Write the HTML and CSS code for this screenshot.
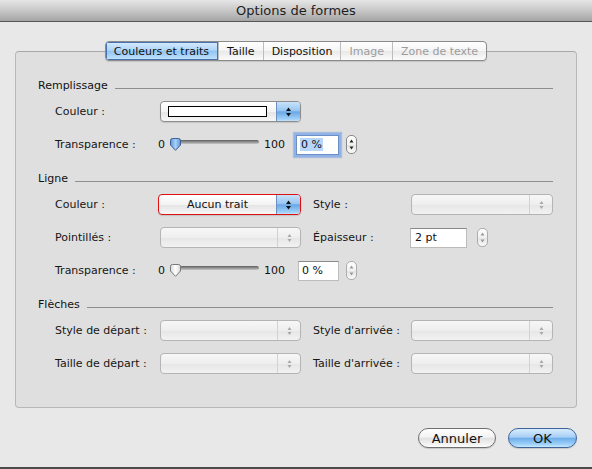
FILE: index.html
```html
<!DOCTYPE html>
<html lang="fr">
<head>
<meta charset="utf-8">
<title>Options de formes</title>
<link rel="stylesheet" href="styles.css">
</head>
<body>
<div class="window">
  <div class="titlebar">Options de formes</div>
  <div class="content">
    <div class="tabs">
      <div class="tab selected">Couleurs et traits</div>
      <div class="tab">Taille</div>
      <div class="tab">Disposition</div>
      <div class="tab disabled">Image</div>
      <div class="tab disabled">Zone de texte</div>
    </div>
    <div class="panel">
      <section class="group">
        <div class="group-head"><span>Remplissage</span><span class="rule"></span></div>
        <div class="row">
          <span class="lbl">Couleur :</span>
          <div class="popup">
            <span class="popup-body"><span class="swatch"></span></span>
            <span class="popup-arrows blue"><svg width="7" height="10" viewBox="0 0 7 10"><polygon points="1,4 3.5,0.5 6,4" fill="#111"/><polygon points="1,6 3.5,9.5 6,6" fill="#111"/></svg></span>
          </div>
        </div>
        <div class="row">
          <span class="lbl">Transparence :</span>
          <div class="trans">
            <span class="num zero">0</span>
            <div class="slider">
              <span class="track"></span>
              <svg class="thumb" width="13" height="13" viewBox="0 0 13 13"><defs><linearGradient id="tb" x1="0" y1="0" x2="1" y2="0"><stop offset="0" stop-color="#5d95d8"/><stop offset="0.5" stop-color="#a9d0f7"/><stop offset="1" stop-color="#5d95d8"/></linearGradient></defs><path d="M1.5 2.5 Q1.5 0.5 3.5 0.5 H9.5 Q11.5 0.5 11.5 2.5 V7 L6.5 12.3 L1.5 7 Z" fill="url(#tb)" stroke="#3b5f96" stroke-width="1"/></svg>
            </div>
            <span class="num">100</span>
            <div class="field focused"><span class="sel">0 %</span></div>
            <div class="stepper"><svg width="5" height="13" viewBox="0 0 5 13"><polygon points="0.5,4.5 2.5,1.5 4.5,4.5" fill="#222"/><polygon points="0.5,8.5 2.5,11.5 4.5,8.5" fill="#222"/></svg></div>
          </div>
        </div>
      </section>

      <section class="group">
        <div class="group-head"><span>Ligne</span><span class="rule"></span></div>
        <div class="row">
          <span class="lbl">Couleur :</span>
          <div class="popup error">
            <span class="popup-body center">Aucun trait</span>
            <span class="popup-arrows blue"><svg width="7" height="10" viewBox="0 0 7 10"><polygon points="1,4 3.5,0.5 6,4" fill="#111"/><polygon points="1,6 3.5,9.5 6,6" fill="#111"/></svg></span>
          </div>
          <span class="lbl lbl2">Style :</span>
          <div class="popup disabled c5">
            <span class="popup-body"></span>
            <span class="popup-arrows"><svg width="7" height="10" viewBox="0 0 7 10"><polygon points="1.5,4 3.5,1 5.5,4" fill="#a8a8a8"/><polygon points="1.5,6 3.5,9 5.5,6" fill="#a8a8a8"/></svg></span>
          </div>
        </div>
        <div class="row">
          <span class="lbl">Pointillés :</span>
          <div class="popup disabled">
            <span class="popup-body"></span>
            <span class="popup-arrows"><svg width="7" height="10" viewBox="0 0 7 10"><polygon points="1.5,4 3.5,1 5.5,4" fill="#a8a8a8"/><polygon points="1.5,6 3.5,9 5.5,6" fill="#a8a8a8"/></svg></span>
          </div>
          <span class="lbl lbl2">Épaisseur :</span>
          <div class="thick c5">
            <div class="field wide">2 pt</div>
            <div class="stepper dim"><svg width="5" height="13" viewBox="0 0 5 13"><polygon points="0.5,4.5 2.5,1.5 4.5,4.5" fill="#9a9a9a"/><polygon points="0.5,8.5 2.5,11.5 4.5,8.5" fill="#9a9a9a"/></svg></div>
          </div>
        </div>
        <div class="row">
          <span class="lbl">Transparence :</span>
          <div class="trans">
            <span class="num zero">0</span>
            <div class="slider">
              <span class="track"></span>
              <svg class="thumb" width="13" height="13" viewBox="0 0 13 13"><defs><linearGradient id="tw" x1="0" y1="0" x2="1" y2="0"><stop offset="0" stop-color="#d8d8d8"/><stop offset="0.5" stop-color="#ffffff"/><stop offset="1" stop-color="#d8d8d8"/></linearGradient></defs><path d="M1.5 2.5 Q1.5 0.5 3.5 0.5 H9.5 Q11.5 0.5 11.5 2.5 V7 L6.5 12.3 L1.5 7 Z" fill="url(#tw)" stroke="#777" stroke-width="1"/></svg>
            </div>
            <span class="num">100</span>
            <div class="field plain">0 %</div>
            <div class="stepper dim"><svg width="5" height="13" viewBox="0 0 5 13"><polygon points="0.5,4.5 2.5,1.5 4.5,4.5" fill="#9a9a9a"/><polygon points="0.5,8.5 2.5,11.5 4.5,8.5" fill="#9a9a9a"/></svg></div>
          </div>
        </div>
      </section>

      <section class="group">
        <div class="group-head"><span>Flèches</span><span class="rule"></span></div>
        <div class="row">
          <span class="lbl">Style de départ :</span>
          <div class="popup disabled">
            <span class="popup-body"></span>
            <span class="popup-arrows"><svg width="7" height="10" viewBox="0 0 7 10"><polygon points="1.5,4 3.5,1 5.5,4" fill="#a8a8a8"/><polygon points="1.5,6 3.5,9 5.5,6" fill="#a8a8a8"/></svg></span>
          </div>
          <span class="lbl lbl2">Style d'arrivée :</span>
          <div class="popup disabled c5">
            <span class="popup-body"></span>
            <span class="popup-arrows"><svg width="7" height="10" viewBox="0 0 7 10"><polygon points="1.5,4 3.5,1 5.5,4" fill="#a8a8a8"/><polygon points="1.5,6 3.5,9 5.5,6" fill="#a8a8a8"/></svg></span>
          </div>
        </div>
        <div class="row">
          <span class="lbl">Taille de départ :</span>
          <div class="popup disabled">
            <span class="popup-body"></span>
            <span class="popup-arrows"><svg width="7" height="10" viewBox="0 0 7 10"><polygon points="1.5,4 3.5,1 5.5,4" fill="#a8a8a8"/><polygon points="1.5,6 3.5,9 5.5,6" fill="#a8a8a8"/></svg></span>
          </div>
          <span class="lbl lbl2">Taille d'arrivée :</span>
          <div class="popup disabled c5">
            <span class="popup-body"></span>
            <span class="popup-arrows"><svg width="7" height="10" viewBox="0 0 7 10"><polygon points="1.5,4 3.5,1 5.5,4" fill="#a8a8a8"/><polygon points="1.5,6 3.5,9 5.5,6" fill="#a8a8a8"/></svg></span>
          </div>
        </div>
      </section>
    </div>
    <div class="buttons">
      <div class="btn cancel">Annuler</div>
      <div class="btn default">OK</div>
    </div>
  </div>
</div>
</body>
</html>
```

FILE: styles.css
```css
html, body {
  margin: 0;
  padding: 0;
}
body {
  background: #e8e8e8;
  font-family: "DejaVu Sans", "Lucida Grande", sans-serif;
  font-size: 11px;
  color: #161616;
}
.window {
  width: 592px;
  height: 469px;
  box-sizing: border-box;
  display: flex;
  flex-direction: column;
  border-bottom: 2px solid #4a4a4a;
  overflow: hidden;
}
.titlebar {
  flex: none;
  height: 22px;
  box-sizing: border-box;
  border-bottom: 1px solid #565656;
  background: linear-gradient(#e6e6e6, #c4c4c4 55%, #a4a4a4);
  display: flex;
  align-items: center;
  justify-content: center;
  font-size: 13px;
  color: #1e1e1e;
}
.content {
  flex: 1;
  display: flex;
  flex-direction: column;
  padding: 19px 15px 0;
}
.tabs {
  align-self: center;
  display: flex;
  height: 20px;
  margin-bottom: -10px;
  z-index: 1;
  box-sizing: border-box;
  border: 1px solid #8a8a8a;
  border-radius: 4px;
  overflow: hidden;
  background: linear-gradient(#ffffff, #f4f4f4 50%, #e9e9e9 51%, #fbfbfb);
  box-shadow: 0 1px 1px rgba(0, 0, 0, 0.12);
}
.tab {
  display: flex;
  align-items: center;
  padding: 0 8px;
  border-left: 1px solid #bdbdbd;
  color: #111;
}
.tab:first-child {
  border-left: 0;
}
.tab.selected {
  background: linear-gradient(#d6ebfd, #b0d5f7 45%, #92c4f2 52%, #c4e5fc);
  box-shadow: inset 0 0 0 1px #4a72ad;
  padding: 0 9px 0 8px;
}
.tab.disabled {
  color: #9c9c9c;
}
.panel {
  height: 357px;
  box-sizing: border-box;
  background: #dfdfdf;
  border: 1px solid #b8b8b8;
  border-top-color: #a8a8a8;
  border-radius: 4px;
  padding: 24px 23px 0 22px;
}
.group + .group {
  margin-top: 8px;
}
.group-head {
  height: 19px;
  display: flex;
  align-items: center;
  gap: 7px;
  color: #111;
}
.rule {
  flex: 1;
  border-top: 1px solid #8e8e8e;
  margin-top: 5px;
}
.row {
  height: 33px;
  margin-left: 17px;
  display: grid;
  grid-template-columns: 105px 141px 12px 98px 142px;
  align-items: center;
}
.lbl {
  grid-column: 1;
  white-space: nowrap;
}
.lbl2 {
  grid-column: 4;
}
.c5 {
  grid-column: 5;
}
.popup {
  grid-column: 2;
  height: 21px;
  box-sizing: border-box;
  display: flex;
  border: 1px solid #8c8c8c;
  border-radius: 4px;
  overflow: hidden;
  background: linear-gradient(#ffffff, #f3f3f3 50%, #e4e4e4 52%, #f7f7f7);
  box-shadow: 0 1px 1px rgba(0, 0, 0, 0.12);
}
.popup.c5 {
  grid-column: 5;
}
.popup.error {
  border-color: #e01010;
  margin-left: -2px;
}
.popup.disabled {
  border-color: #b4b4b4;
  background: linear-gradient(#f7f7f7, #eeeeee 50%, #e6e6e6 52%, #f2f2f2);
  box-shadow: none;
}
.popup-body {
  flex: 1;
  display: flex;
  align-items: center;
  padding-left: 7px;
}
.popup-body.center {
  justify-content: center;
  padding-left: 0;
  color: #111;
}
.swatch {
  width: 99px;
  height: 11px;
  box-sizing: border-box;
  border: 1px solid #000;
  background: #fff;
}
.popup-arrows {
  width: 22px;
  flex: none;
  display: flex;
  align-items: center;
  justify-content: center;
  border-left: 1px solid #d2d2d2;
}
.popup-arrows.blue {
  width: 23px;
  border-left: 1px solid #6b8fc2;
  background: linear-gradient(#c9e2fa, #98c6f2 45%, #6aa7e6 52%, #9fd0f8 90%, #c3e4fc);
}
.trans {
  grid-column: 2 / 6;
  display: flex;
  align-items: center;
}
.num {
  color: #111;
}
.num.zero {
  margin-left: -2px;
  width: 12px;
}
.slider {
  display: grid;
  width: 89px;
  margin-right: 5px;
}
.track,
.thumb {
  grid-area: 1 / 1;
}
.track {
  align-self: start;
  margin-top: 2px;
  height: 4px;
  border-radius: 2px;
  background: linear-gradient(#5e5e5e, #9c9c9c 60%, #c8c8c8);
}
.thumb {
  justify-self: start;
  margin-left: -1px;
  margin-top: 0;
}
.field {
  width: 43px;
  height: 20px;
  box-sizing: border-box;
  margin-left: 11px;
  padding-left: 3px;
  display: flex;
  align-items: center;
  background: #fff;
  border: 1px solid #bcbcbc;
  border-top-color: #8a8a8a;
  color: #111;
}
.field.focused {
  border-color: #6d8fc4;
  box-shadow: 0 0 0 2px #8fb3e6, 0 0 1px 3px rgba(120, 160, 220, 0.5);
}
.field.plain {
  width: 41px;
  margin-left: 13px;
}
.sel {
  background: #b7d6fb;
  padding: 0 1px;
}
.stepper {
  width: 11px;
  height: 19px;
  box-sizing: border-box;
  margin-left: 7px;
  border: 1px solid #8a8a8a;
  border-radius: 5px;
  background: linear-gradient(#ffffff, #f1f1f1 50%, #e4e4e4 52%, #f9f9f9);
  display: flex;
  align-items: center;
  justify-content: center;
}
.stepper.dim {
  border-color: #acacac;
}
.thick {
  display: flex;
  align-items: center;
}
.field.wide {
  width: 57px;
  margin-left: -1px;
  padding-left: 4px;
}
.thick .stepper {
  margin-left: 10px;
}
.buttons {
  display: flex;
  justify-content: flex-end;
  gap: 12px;
  margin-top: 20px;
}
.btn {
  height: 20px;
  box-sizing: border-box;
  border-radius: 10px;
  border: 1px solid #6f6f6f;
  display: flex;
  align-items: center;
  justify-content: center;
  font-size: 13px;
  color: #111;
  background: linear-gradient(#ffffff, #f3f3f3 45%, #e1e1e1 52%, #f6f6f6 90%, #ffffff);
  box-shadow: 0 1px 1px rgba(0, 0, 0, 0.15);
}
.btn.cancel {
  width: 78px;
}
.btn.default {
  width: 69px;
  border-color: #3f649c;
  background: linear-gradient(#d8ebfd, #a8d0f6 45%, #6eaeea 52%, #9ed1fa 85%, #c8eafe);
}
```
